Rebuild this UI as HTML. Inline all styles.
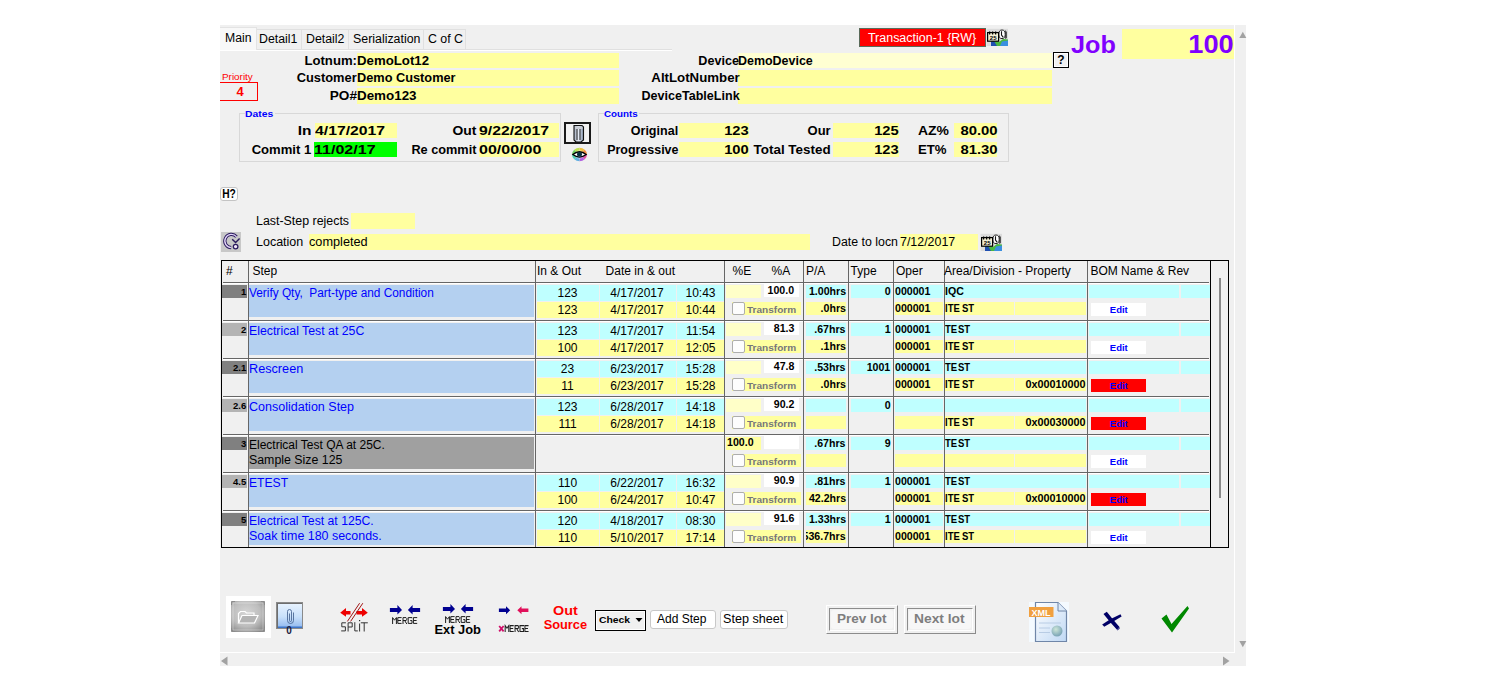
<!DOCTYPE html>
<html><head><meta charset="utf-8"><title>Job</title>
<style>
html,body{margin:0;padding:0;}
body{width:1498px;height:690px;overflow:hidden;background:#fff;position:relative;font-family:"Liberation Sans", sans-serif;}
body>div{position:absolute;}
.t{white-space:pre;}
</style></head><body>
<div style="left:220px;top:25px;width:1026px;height:641px;background:#F0F0F0;"></div>
<div style="left:1234px;top:25px;width:1px;height:628px;background:#FFFFFF;"></div>
<div style="left:220px;top:652px;width:1015px;height:1px;background:#FFFFFF;"></div>
<svg style="position:absolute;left:1238px;top:30px;" width="9" height="10" viewBox="0 0 9 10"><polygon points="1.3,8 8.3,8 4.8,1.8" fill="#A2A2A2"/></svg>
<svg style="position:absolute;left:1238px;top:639px;" width="9" height="10" viewBox="0 0 9 10"><polygon points="1.3,2 8.3,2 4.8,8.2" fill="#A2A2A2"/></svg>
<svg style="position:absolute;left:220px;top:655px;" width="9" height="12" viewBox="0 0 9 12"><polygon points="1,6 7.5,1.5 7.5,10.5" fill="#A2A2A2"/></svg>
<svg style="position:absolute;left:1222px;top:655px;" width="9" height="12" viewBox="0 0 9 12"><polygon points="1,1.5 7.5,6 1,10.5" fill="#A2A2A2"/></svg>
<div style="left:256px;top:29px;width:46px;height:21px;box-sizing:border-box;border:1px solid #E0E0E0;background:#F0F0F0;"></div>
<div style="left:301px;top:29px;width:48px;height:21px;box-sizing:border-box;border:1px solid #E0E0E0;background:#F0F0F0;"></div>
<div style="left:348px;top:29px;width:76px;height:21px;box-sizing:border-box;border:1px solid #E0E0E0;background:#F0F0F0;"></div>
<div style="left:423px;top:29px;width:43px;height:21px;box-sizing:border-box;border:1px solid #E0E0E0;background:#F0F0F0;"></div>
<div style="left:220px;top:27px;width:37px;height:23px;box-sizing:border-box;border:1px solid #E3E3E3;background:#F8F8F8;border-left:none;border-bottom:none;"></div>
<div style="left:466px;top:49px;width:206px;height:1px;background:#E0E0E0;"></div>
<div style="left:220px;top:50px;width:452px;height:1px;background:#FFFFFF;"></div>
<div class="t" style="left:224.5px;top:31.00px;font-size:12px;line-height:14px;font-weight:normal;color:#000;transform:scaleX(1.0163);transform-origin:0 0;">Main</div>
<div class="t" style="left:259.0px;top:32.00px;font-size:12px;line-height:14px;font-weight:normal;color:#000;transform:scaleX(1.0262);transform-origin:0 0;">Detail1</div>
<div class="t" style="left:305.5px;top:32.00px;font-size:12px;line-height:14px;font-weight:normal;color:#000;transform:scaleX(1.0289);transform-origin:0 0;">Detail2</div>
<div class="t" style="left:352.8px;top:32.00px;font-size:12px;line-height:14px;font-weight:normal;color:#000;transform:scaleX(1.0316);transform-origin:0 0;">Serialization</div>
<div class="t" style="left:427.5px;top:32.00px;font-size:12px;line-height:14px;font-weight:normal;color:#000;transform:scaleX(1.0301);transform-origin:0 0;">C of C</div>
<div style="left:357px;top:53px;width:262px;height:15px;background:#FFFF9F;"></div>
<div style="left:357px;top:70px;width:262px;height:16px;background:#FFFF9F;"></div>
<div style="left:357px;top:88px;width:262px;height:16px;background:#FFFF9F;"></div>
<div class="t" style="left:304.72px;top:53.00px;font-size:13px;line-height:15px;font-weight:bold;color:#000;transform:scaleX(1.0111);transform-origin:51.98px 0;">Lotnum:</div>
<div class="t" style="left:356.8px;top:53.00px;font-size:13px;line-height:15px;font-weight:bold;color:#000;transform:scaleX(1.0178);transform-origin:0 0;">DemoLot12</div>
<div class="t" style="left:296.01px;top:70.00px;font-size:13px;line-height:15px;font-weight:bold;color:#000;transform:scaleX(0.9897);transform-origin:60.69px 0;">Customer</div>
<div class="t" style="left:356.8px;top:70.00px;font-size:13px;line-height:15px;font-weight:bold;color:#000;transform:scaleX(0.9815);transform-origin:0 0;">Demo Customer</div>
<div class="t" style="left:330.68px;top:88.00px;font-size:13px;line-height:15px;font-weight:bold;color:#000;transform:scaleX(1.0478);transform-origin:26.02px 0;">PO#</div>
<div class="t" style="left:356.8px;top:88.00px;font-size:13px;line-height:15px;font-weight:bold;color:#000;transform:scaleX(1.0302);transform-origin:0 0;">Demo123</div>
<div style="left:738px;top:53px;width:314px;height:15px;background:#FFFFD2;"></div>
<div style="left:738px;top:70px;width:314px;height:16px;background:#FFFF9F;"></div>
<div style="left:738px;top:88px;width:314px;height:16px;background:#FFFF9F;"></div>
<div class="t" style="left:697.28px;top:53.00px;font-size:13px;line-height:15px;font-weight:bold;color:#000;transform:scaleX(0.9675);transform-origin:41.92px 0;">Device</div>
<div class="t" style="left:737.8px;top:53.00px;font-size:13px;line-height:15px;font-weight:bold;color:#000;transform:scaleX(0.9579);transform-origin:0 0;">DemoDevice</div>
<div class="t" style="left:652.53px;top:70.00px;font-size:13px;line-height:15px;font-weight:bold;color:#000;transform:scaleX(1.0195);transform-origin:86.67px 0;">AltLotNumber</div>
<div class="t" style="left:637.56px;top:88.00px;font-size:13px;line-height:15px;font-weight:bold;color:#000;transform:scaleX(0.9658);transform-origin:101.64px 0;">DeviceTableLink</div>
<div style="left:1053px;top:52px;width:16px;height:16px;box-sizing:border-box;border:1px solid #000;background:#F0F0F0;box-shadow:inset 0 0 0 1px #FFFFFF;"></div>
<div class="t" style="left:761px;width:600px;text-align:center;top:53.00px;font-size:12px;line-height:14px;font-weight:bold;color:#000;">?</div>
<div style="left:859px;top:28px;width:127px;height:19px;box-sizing:border-box;border:1px solid #5A6A5A;background:#FF0000;"></div>
<div class="t" style="left:870.48px;top:31.00px;font-size:12px;line-height:14px;font-weight:normal;color:#FFFFFF;transform:scaleX(1.0393);transform-origin:52.02px 0;">Transaction-1 {RW}</div>
<div class="t" style="left:1071.0px;top:31.00px;font-size:24px;line-height:27px;font-weight:bold;color:#8000FF;transform:scaleX(1.0517);transform-origin:0 0;">Job</div>
<div style="left:1122px;top:29px;width:112px;height:30px;background:#FFFF9F;"></div>
<div class="t" style="left:1191.98px;top:30.00px;font-size:25px;line-height:28px;font-weight:bold;color:#8000FF;transform:scaleX(1.0882);transform-origin:41.72px 0;">100</div>
<div class="t" style="left:222.0px;top:72.00px;font-size:9px;line-height:10px;font-weight:normal;color:#FF0000;transform:scaleX(1.0987);transform-origin:0 0;">Priority</div>
<div style="left:220px;top:82px;width:38px;height:19px;box-sizing:border-box;border:1px solid #FF0000;background:transparent;border-left:none;"></div>
<div class="t" style="left:-60px;width:600px;text-align:center;top:84.00px;font-size:13px;line-height:15px;font-weight:bold;color:#FF0000;">4</div>
<div style="left:239px;top:113px;width:322px;height:49px;box-sizing:border-box;border:1px solid #D8D8D8;background:transparent;"></div>
<div style="left:244.6px;top:109px;width:30.00000000000003px;height:7px;background:#F0F0F0;"></div>
<div class="t" style="left:244.6px;top:108.00px;font-size:9.5px;line-height:11px;font-weight:bold;color:#0000FF;transform:scaleX(1.0875);transform-origin:0 0;">Dates</div>
<div style="left:598px;top:113px;width:411px;height:49px;box-sizing:border-box;border:1px solid #D8D8D8;background:transparent;"></div>
<div style="left:603.5px;top:109px;width:35.5px;height:7px;background:#F0F0F0;"></div>
<div class="t" style="left:603.5px;top:108.00px;font-size:9.5px;line-height:11px;font-weight:bold;color:#0000FF;transform:scaleX(1.0282);transform-origin:0 0;">Counts</div>
<div class="t" style="left:299.64px;top:123.00px;font-size:13px;line-height:15px;font-weight:bold;color:#000;transform:scaleX(1.1901);transform-origin:11.56px 0;">In</div>
<div style="left:315px;top:123px;width:82px;height:15px;background:#FFFF9F;"></div>
<div class="t" style="left:314.5px;top:123.00px;font-size:13px;line-height:15px;font-weight:bold;color:#000;transform:scaleX(1.2112);transform-origin:0 0;">4/17/2017</div>
<div class="t" style="left:252.47px;top:142.00px;font-size:13px;line-height:15px;font-weight:bold;color:#000;transform:scaleX(1.0055);transform-origin:59.23px 0;">Commit 1</div>
<div style="left:314px;top:142px;width:83px;height:15px;background:#00FF00;"></div>
<div class="t" style="left:313.5px;top:142.00px;font-size:13px;line-height:15px;font-weight:bold;color:#000;transform:scaleX(1.2339);transform-origin:0 0;">11/02/17</div>
<div class="t" style="left:454.11px;top:123.00px;font-size:13px;line-height:15px;font-weight:bold;color:#000;transform:scaleX(1.0701);transform-origin:22.39px 0;">Out</div>
<div style="left:479px;top:123px;width:80px;height:15px;background:#FFFF9F;"></div>
<div class="t" style="left:478.5px;top:123.00px;font-size:13px;line-height:15px;font-weight:bold;color:#000;transform:scaleX(1.2112);transform-origin:0 0;">9/22/2017</div>
<div class="t" style="left:410.23px;top:142.00px;font-size:13px;line-height:15px;font-weight:bold;color:#000;transform:scaleX(0.9788);transform-origin:66.47px 0;">Re commit</div>
<div style="left:479px;top:142px;width:80px;height:15px;background:#FFFF9F;"></div>
<div class="t" style="left:478.5px;top:142.00px;font-size:13px;line-height:15px;font-weight:bold;color:#000;transform:scaleX(1.2322);transform-origin:0 0;">00/00/00</div>
<div class="t" style="left:629.08px;top:123.00px;font-size:13px;line-height:15px;font-weight:bold;color:#000;transform:scaleX(0.9641);transform-origin:49.12px 0;">Original</div>
<div style="left:679px;top:123px;width:70px;height:15px;background:#FFFF9F;"></div>
<div class="t" style="left:727.00px;top:123.00px;font-size:13px;line-height:15px;font-weight:bold;color:#000;transform:scaleX(1.1316);transform-origin:21.70px 0;">123</div>
<div class="t" style="left:603.76px;top:142.00px;font-size:13px;line-height:15px;font-weight:bold;color:#000;transform:scaleX(0.9573);transform-origin:74.44px 0;">Progressive</div>
<div style="left:679px;top:142px;width:70px;height:15px;background:#FFFF9F;"></div>
<div class="t" style="left:727.00px;top:142.00px;font-size:13px;line-height:15px;font-weight:bold;color:#000;transform:scaleX(1.1316);transform-origin:21.70px 0;">100</div>
<div class="t" style="left:230.70000000000005px;width:600px;text-align:right;top:123.00px;font-size:13px;line-height:15px;font-weight:bold;color:#000;">Our</div>
<div style="left:833px;top:123px;width:66px;height:15px;background:#FFFF9F;"></div>
<div class="t" style="left:877.00px;top:123.00px;font-size:13px;line-height:15px;font-weight:bold;color:#000;transform:scaleX(1.1316);transform-origin:21.70px 0;">125</div>
<div class="t" style="left:756.06px;top:142.00px;font-size:13px;line-height:15px;font-weight:bold;color:#000;transform:scaleX(1.0324);transform-origin:74.64px 0;">Total Tested</div>
<div style="left:833px;top:142px;width:66px;height:15px;background:#FFFF9F;"></div>
<div class="t" style="left:877.00px;top:142.00px;font-size:13px;line-height:15px;font-weight:bold;color:#000;transform:scaleX(1.1316);transform-origin:21.70px 0;">123</div>
<div class="t" style="left:918.0px;top:123.00px;font-size:13px;line-height:15px;font-weight:bold;color:#000;transform:scaleX(1.0716);transform-origin:0 0;">AZ%</div>
<div style="left:954px;top:123px;width:43px;height:15px;background:#FFFF9F;"></div>
<div class="t" style="left:964.65px;top:123.00px;font-size:13px;line-height:15px;font-weight:bold;color:#000;transform:scaleX(1.1417);transform-origin:32.55px 0;">80.00</div>
<div class="t" style="left:918.0px;top:142.00px;font-size:13px;line-height:15px;font-weight:bold;color:#000;transform:scaleX(1.0138);transform-origin:0 0;">ET%</div>
<div style="left:954px;top:142px;width:43px;height:15px;background:#FFFF9F;"></div>
<div class="t" style="left:964.65px;top:142.00px;font-size:13px;line-height:15px;font-weight:bold;color:#000;transform:scaleX(1.1417);transform-origin:32.55px 0;">81.30</div>
<div style="left:220px;top:187px;width:18px;height:14px;box-sizing:border-box;border:1px solid #C4C4C4;background:#FFFFFF;border-radius:3px;"></div>
<div class="t" style="left:221.00px;top:187.00px;font-size:12px;line-height:14px;font-weight:bold;color:#000;transform:scaleX(0.8525);transform-origin:8.00px 0;">H?</div>
<div class="t" style="left:255.60000000000002px;top:214.00px;font-size:12px;line-height:14px;font-weight:normal;color:#000;transform:scaleX(1.0332);transform-origin:0 0;">Last-Step rejects</div>
<div style="left:351px;top:213px;width:64px;height:16px;background:#FFFF9F;"></div>
<div class="t" style="left:255.60000000000002px;top:235.00px;font-size:12px;line-height:14px;font-weight:normal;color:#000;transform:scaleX(1.0411);transform-origin:0 0;">Location</div>
<div style="left:309px;top:234px;width:501px;height:16px;background:#FFFF9F;"></div>
<div class="t" style="left:308.7px;top:235.00px;font-size:12px;line-height:14px;font-weight:normal;color:#000;transform:scaleX(1.0590);transform-origin:0 0;">completed</div>
<div class="t" style="left:832.0px;top:235.00px;font-size:12px;line-height:14px;font-weight:normal;color:#000;transform:scaleX(1.0296);transform-origin:0 0;">Date to locn</div>
<div style="left:900px;top:234px;width:78px;height:16px;background:#FFFF9F;"></div>
<div class="t" style="left:899.5px;top:235.00px;font-size:12px;line-height:14px;font-weight:normal;color:#000;transform:scaleX(1.0346);transform-origin:0 0;">7/12/2017</div>
<div style="left:221px;top:260px;width:1008px;height:288px;box-sizing:border-box;border:1px solid #000;background:transparent;"></div>
<div style="left:223px;top:282px;width:986px;height:1px;background:#666666;"></div>
<div style="left:223px;top:283px;width:986px;height:1px;background:#FFFFFF;"></div>
<div style="left:223px;top:320px;width:986px;height:1px;background:#666666;"></div>
<div style="left:223px;top:321px;width:986px;height:1px;background:#FFFFFF;"></div>
<div style="left:223px;top:358px;width:986px;height:1px;background:#666666;"></div>
<div style="left:223px;top:359px;width:986px;height:1px;background:#FFFFFF;"></div>
<div style="left:223px;top:396px;width:986px;height:1px;background:#666666;"></div>
<div style="left:223px;top:397px;width:986px;height:1px;background:#FFFFFF;"></div>
<div style="left:223px;top:434px;width:986px;height:1px;background:#666666;"></div>
<div style="left:223px;top:435px;width:986px;height:1px;background:#FFFFFF;"></div>
<div style="left:223px;top:472px;width:986px;height:1px;background:#666666;"></div>
<div style="left:223px;top:473px;width:986px;height:1px;background:#FFFFFF;"></div>
<div style="left:223px;top:510px;width:986px;height:1px;background:#666666;"></div>
<div style="left:223px;top:511px;width:986px;height:1px;background:#FFFFFF;"></div>
<div style="left:248px;top:261px;width:1px;height:286px;background:#666666;"></div>
<div style="left:535px;top:261px;width:1px;height:286px;background:#666666;"></div>
<div style="left:724px;top:261px;width:1px;height:286px;background:#666666;"></div>
<div style="left:803px;top:261px;width:1px;height:286px;background:#666666;"></div>
<div style="left:848px;top:261px;width:1px;height:286px;background:#666666;"></div>
<div style="left:893px;top:261px;width:1px;height:286px;background:#666666;"></div>
<div style="left:944px;top:261px;width:1px;height:286px;background:#666666;"></div>
<div style="left:1087px;top:261px;width:1px;height:286px;background:#666666;"></div>
<div style="left:1210px;top:261px;width:1px;height:286px;background:#000000;"></div>
<div style="left:1219px;top:278px;width:2px;height:220px;background:#888888;"></div>
<div class="t" style="left:226.0px;top:264.00px;font-size:12px;line-height:14px;font-weight:normal;color:#000;">#</div>
<div class="t" style="left:252.5px;top:264.00px;font-size:12px;line-height:14px;font-weight:normal;color:#000;">Step</div>
<div class="t" style="left:537.0px;top:264.00px;font-size:12px;line-height:14px;font-weight:normal;color:#000;">In &amp; Out</div>
<div class="t" style="left:605.6px;top:264.00px;font-size:12px;line-height:14px;font-weight:normal;color:#000;">Date in &amp; out</div>
<div class="t" style="left:732.6px;top:264.00px;font-size:12px;line-height:14px;font-weight:normal;color:#000;">%E</div>
<div class="t" style="left:771.6px;top:264.00px;font-size:12px;line-height:14px;font-weight:normal;color:#000;">%A</div>
<div class="t" style="left:806.0px;top:264.00px;font-size:12px;line-height:14px;font-weight:normal;color:#000;">P/A</div>
<div class="t" style="left:850.6px;top:264.00px;font-size:12px;line-height:14px;font-weight:normal;color:#000;">Type</div>
<div class="t" style="left:896.0px;top:264.00px;font-size:12px;line-height:14px;font-weight:normal;color:#000;">Oper</div>
<div class="t" style="left:944.0px;top:264.00px;font-size:12px;line-height:14px;font-weight:normal;color:#000;">Area/Division - Property</div>
<div class="t" style="left:1090.4px;top:264.00px;font-size:12px;line-height:14px;font-weight:normal;color:#000;">BOM Name &amp; Rev</div>
<div style="left:222px;top:285px;width:25px;height:13px;background:#808080;"></div>
<div class="t" style="left:-353.8px;width:600px;text-align:right;top:286.00px;font-size:9.5px;line-height:11px;font-weight:bold;color:#000;">1</div>
<div style="left:249px;top:285px;width:285px;height:32px;background:#B4D0F0;"></div>
<div class="t" style="left:249.0px;top:286.00px;font-size:12px;line-height:14px;font-weight:normal;color:#0000FF;transform:scaleX(0.9868);transform-origin:0 0;">Verify Qty,  Part-type and Condition</div>
<div style="left:537px;top:285px;width:62px;height:16px;background:#BFFFFF;"></div>
<div style="left:537px;top:302px;width:62px;height:16px;background:#FFFF9F;"></div>
<div style="left:600px;top:285px;width:76px;height:16px;background:#BFFFFF;"></div>
<div style="left:600px;top:302px;width:76px;height:16px;background:#FFFF9F;"></div>
<div style="left:677px;top:285px;width:47px;height:16px;background:#BFFFFF;"></div>
<div style="left:677px;top:302px;width:47px;height:16px;background:#FFFF9F;"></div>
<div class="t" style="left:267.5px;width:600px;text-align:center;top:286.00px;font-size:12px;line-height:14px;font-weight:normal;color:#000;">123</div>
<div class="t" style="left:267.5px;width:600px;text-align:center;top:303.00px;font-size:12px;line-height:14px;font-weight:normal;color:#000;">123</div>
<div class="t" style="left:337px;width:600px;text-align:center;top:286.00px;font-size:12px;line-height:14px;font-weight:normal;color:#000;">4/17/2017</div>
<div class="t" style="left:337px;width:600px;text-align:center;top:303.00px;font-size:12px;line-height:14px;font-weight:normal;color:#000;">4/17/2017</div>
<div class="t" style="left:400.5px;width:600px;text-align:center;top:286.00px;font-size:12px;line-height:14px;font-weight:normal;color:#000;">10:43</div>
<div class="t" style="left:400.5px;width:600px;text-align:center;top:303.00px;font-size:12px;line-height:14px;font-weight:normal;color:#000;">10:44</div>
<div style="left:726px;top:285px;width:35px;height:13px;background:#FFFFC8;"></div>
<div style="left:764px;top:284px;width:35px;height:13px;background:#FFFFFF;"></div>
<div class="t" style="left:769.47px;top:285.00px;font-size:10px;line-height:11px;font-weight:bold;color:#000;transform:scaleX(1.0600);transform-origin:25.03px 0;">100.0</div>
<div style="left:732px;top:302px;width:69px;height:13px;background:#FFFF9F;"></div>
<div style="left:732px;top:302px;width:13px;height:13px;box-sizing:border-box;border:1px solid #ADADAD;background:#FDFDFD;border-radius:2px;"></div>
<div class="t" style="left:747.0px;top:304.00px;font-size:9.5px;line-height:11px;font-weight:bold;color:#76767A;transform:scaleX(1.0575);transform-origin:0 0;">Transform</div>
<div style="left:806px;top:285px;width:40px;height:13px;background:#BFFFFF;"></div>
<div style="left:806px;top:302px;width:40px;height:13px;background:#FFFF9F;"></div>
<div class="t" style="left:810.77px;top:286.00px;font-size:10px;line-height:11px;font-weight:bold;color:#000;transform:scaleX(1.0600);transform-origin:35.03px 0;">1.00hrs</div>
<div class="t" style="left:821.89px;top:303.00px;font-size:10px;line-height:11px;font-weight:bold;color:#000;transform:scaleX(1.0600);transform-origin:23.91px 0;">.0hrs</div>
<div style="left:851px;top:285px;width:40px;height:13px;background:#BFFFFF;"></div>
<div class="t" style="left:884.94px;top:286.00px;font-size:10px;line-height:11px;font-weight:bold;color:#000;transform:scaleX(1.0600);transform-origin:5.56px 0;">0</div>
<div style="left:895px;top:285px;width:48px;height:13px;background:#BFFFFF;"></div>
<div style="left:895px;top:302px;width:48px;height:13px;background:#FFFF9F;"></div>
<div class="t" style="left:894.5px;top:286.00px;font-size:10px;line-height:11px;font-weight:bold;color:#000;transform:scaleX(1.0607);transform-origin:0 0;">000001</div>
<div class="t" style="left:894.5px;top:303.00px;font-size:10px;line-height:11px;font-weight:bold;color:#000;transform:scaleX(1.0607);transform-origin:0 0;">000001</div>
<div style="left:945px;top:285px;width:141px;height:13px;background:#BFFFFF;"></div>
<div style="left:945px;top:302px;width:69px;height:13px;background:#FFFF9F;"></div>
<div style="left:1015px;top:302px;width:71px;height:13px;background:#FFFF9F;"></div>
<div class="t" style="left:944.5px;top:286.00px;font-size:10px;line-height:11px;font-weight:bold;color:#000;transform:scaleX(1.0600);transform-origin:0 0;">IQC</div>
<div class="t" style="left:945.0px;top:303.00px;font-size:10px;line-height:11px;font-weight:bold;color:#000;transform:scaleX(0.9500);transform-origin:0 0;">ITE</div>
<div class="t" style="left:961.5px;top:303.00px;font-size:10px;line-height:11px;font-weight:bold;color:#000;transform:scaleX(0.9500);transform-origin:0 0;">ST</div>
<div style="left:1089px;top:285px;width:90px;height:13px;background:#BFFFFF;"></div>
<div style="left:1181px;top:285px;width:29px;height:13px;background:#BFFFFF;"></div>
<div style="left:1091px;top:303px;width:55px;height:13px;background:#FFFFFF;"></div>
<div class="t" style="left:818.8px;width:600px;text-align:center;top:304.00px;font-size:9.5px;line-height:11px;font-weight:bold;color:#0000FF;">Edit</div>
<div style="left:222px;top:323px;width:25px;height:13px;background:#B4B4B4;"></div>
<div class="t" style="left:-353.8px;width:600px;text-align:right;top:324.00px;font-size:9.5px;line-height:11px;font-weight:bold;color:#000;">2</div>
<div style="left:249px;top:323px;width:285px;height:32px;background:#B4D0F0;"></div>
<div class="t" style="left:249.0px;top:324.00px;font-size:12px;line-height:14px;font-weight:normal;color:#0000FF;transform:scaleX(1.0252);transform-origin:0 0;">Electrical Test at 25C</div>
<div style="left:537px;top:323px;width:62px;height:16px;background:#BFFFFF;"></div>
<div style="left:537px;top:340px;width:62px;height:16px;background:#FFFF9F;"></div>
<div style="left:600px;top:323px;width:76px;height:16px;background:#BFFFFF;"></div>
<div style="left:600px;top:340px;width:76px;height:16px;background:#FFFF9F;"></div>
<div style="left:677px;top:323px;width:47px;height:16px;background:#BFFFFF;"></div>
<div style="left:677px;top:340px;width:47px;height:16px;background:#FFFF9F;"></div>
<div class="t" style="left:267.5px;width:600px;text-align:center;top:324.00px;font-size:12px;line-height:14px;font-weight:normal;color:#000;">123</div>
<div class="t" style="left:267.5px;width:600px;text-align:center;top:341.00px;font-size:12px;line-height:14px;font-weight:normal;color:#000;">100</div>
<div class="t" style="left:337px;width:600px;text-align:center;top:324.00px;font-size:12px;line-height:14px;font-weight:normal;color:#000;">4/17/2017</div>
<div class="t" style="left:337px;width:600px;text-align:center;top:341.00px;font-size:12px;line-height:14px;font-weight:normal;color:#000;">4/17/2017</div>
<div class="t" style="left:400.5px;width:600px;text-align:center;top:324.00px;font-size:12px;line-height:14px;font-weight:normal;color:#000;">11:54</div>
<div class="t" style="left:400.5px;width:600px;text-align:center;top:341.00px;font-size:12px;line-height:14px;font-weight:normal;color:#000;">12:05</div>
<div style="left:726px;top:323px;width:35px;height:13px;background:#FFFFC8;"></div>
<div style="left:764px;top:322px;width:35px;height:13px;background:#FFFFFF;"></div>
<div class="t" style="left:775.03px;top:323.00px;font-size:10px;line-height:11px;font-weight:bold;color:#000;transform:scaleX(1.0600);transform-origin:19.47px 0;">81.3</div>
<div style="left:732px;top:340px;width:69px;height:13px;background:#FFFF9F;"></div>
<div style="left:732px;top:340px;width:13px;height:13px;box-sizing:border-box;border:1px solid #ADADAD;background:#FDFDFD;border-radius:2px;"></div>
<div class="t" style="left:747.0px;top:342.00px;font-size:9.5px;line-height:11px;font-weight:bold;color:#76767A;transform:scaleX(1.0575);transform-origin:0 0;">Transform</div>
<div style="left:806px;top:323px;width:40px;height:13px;background:#BFFFFF;"></div>
<div style="left:806px;top:340px;width:40px;height:13px;background:#FFFF9F;"></div>
<div class="t" style="left:816.33px;top:324.00px;font-size:10px;line-height:11px;font-weight:bold;color:#000;transform:scaleX(1.0600);transform-origin:29.47px 0;">.67hrs</div>
<div class="t" style="left:821.89px;top:341.00px;font-size:10px;line-height:11px;font-weight:bold;color:#000;transform:scaleX(1.0600);transform-origin:23.91px 0;">.1hrs</div>
<div style="left:851px;top:323px;width:40px;height:13px;background:#BFFFFF;"></div>
<div class="t" style="left:884.94px;top:324.00px;font-size:10px;line-height:11px;font-weight:bold;color:#000;transform:scaleX(1.0600);transform-origin:5.56px 0;">1</div>
<div style="left:895px;top:323px;width:48px;height:13px;background:#BFFFFF;"></div>
<div style="left:895px;top:340px;width:48px;height:13px;background:#FFFF9F;"></div>
<div class="t" style="left:894.5px;top:324.00px;font-size:10px;line-height:11px;font-weight:bold;color:#000;transform:scaleX(1.0607);transform-origin:0 0;">000001</div>
<div class="t" style="left:894.5px;top:341.00px;font-size:10px;line-height:11px;font-weight:bold;color:#000;transform:scaleX(1.0607);transform-origin:0 0;">000001</div>
<div style="left:945px;top:323px;width:141px;height:13px;background:#BFFFFF;"></div>
<div style="left:945px;top:340px;width:69px;height:13px;background:#FFFF9F;"></div>
<div style="left:1015px;top:340px;width:71px;height:13px;background:#FFFF9F;"></div>
<div class="t" style="left:944.5px;top:324.00px;font-size:10px;line-height:11px;font-weight:bold;color:#000;transform:scaleX(0.9500);transform-origin:0 0;">TE</div>
<div class="t" style="left:958.0px;top:324.00px;font-size:10px;line-height:11px;font-weight:bold;color:#000;transform:scaleX(0.9500);transform-origin:0 0;">ST</div>
<div class="t" style="left:945.0px;top:341.00px;font-size:10px;line-height:11px;font-weight:bold;color:#000;transform:scaleX(0.9500);transform-origin:0 0;">ITE</div>
<div class="t" style="left:961.5px;top:341.00px;font-size:10px;line-height:11px;font-weight:bold;color:#000;transform:scaleX(0.9500);transform-origin:0 0;">ST</div>
<div style="left:1089px;top:323px;width:90px;height:13px;background:#BFFFFF;"></div>
<div style="left:1181px;top:323px;width:29px;height:13px;background:#BFFFFF;"></div>
<div style="left:1091px;top:341px;width:55px;height:13px;background:#FFFFFF;"></div>
<div class="t" style="left:818.8px;width:600px;text-align:center;top:342.00px;font-size:9.5px;line-height:11px;font-weight:bold;color:#0000FF;">Edit</div>
<div style="left:222px;top:361px;width:25px;height:13px;background:#808080;"></div>
<div class="t" style="left:-353.8px;width:600px;text-align:right;top:362.00px;font-size:9.5px;line-height:11px;font-weight:bold;color:#000;">2.1</div>
<div style="left:249px;top:361px;width:285px;height:32px;background:#B4D0F0;"></div>
<div class="t" style="left:249.0px;top:362.00px;font-size:12px;line-height:14px;font-weight:normal;color:#0000FF;transform:scaleX(1.0561);transform-origin:0 0;">Rescreen</div>
<div style="left:537px;top:361px;width:62px;height:16px;background:#BFFFFF;"></div>
<div style="left:537px;top:378px;width:62px;height:16px;background:#FFFF9F;"></div>
<div style="left:600px;top:361px;width:76px;height:16px;background:#BFFFFF;"></div>
<div style="left:600px;top:378px;width:76px;height:16px;background:#FFFF9F;"></div>
<div style="left:677px;top:361px;width:47px;height:16px;background:#BFFFFF;"></div>
<div style="left:677px;top:378px;width:47px;height:16px;background:#FFFF9F;"></div>
<div class="t" style="left:267.5px;width:600px;text-align:center;top:362.00px;font-size:12px;line-height:14px;font-weight:normal;color:#000;">23</div>
<div class="t" style="left:267.5px;width:600px;text-align:center;top:379.00px;font-size:12px;line-height:14px;font-weight:normal;color:#000;">11</div>
<div class="t" style="left:337px;width:600px;text-align:center;top:362.00px;font-size:12px;line-height:14px;font-weight:normal;color:#000;">6/23/2017</div>
<div class="t" style="left:337px;width:600px;text-align:center;top:379.00px;font-size:12px;line-height:14px;font-weight:normal;color:#000;">6/23/2017</div>
<div class="t" style="left:400.5px;width:600px;text-align:center;top:362.00px;font-size:12px;line-height:14px;font-weight:normal;color:#000;">15:28</div>
<div class="t" style="left:400.5px;width:600px;text-align:center;top:379.00px;font-size:12px;line-height:14px;font-weight:normal;color:#000;">15:28</div>
<div style="left:726px;top:361px;width:35px;height:13px;background:#FFFFC8;"></div>
<div style="left:764px;top:360px;width:35px;height:13px;background:#FFFFFF;"></div>
<div class="t" style="left:775.03px;top:361.00px;font-size:10px;line-height:11px;font-weight:bold;color:#000;transform:scaleX(1.0600);transform-origin:19.47px 0;">47.8</div>
<div style="left:732px;top:378px;width:69px;height:13px;background:#FFFF9F;"></div>
<div style="left:732px;top:378px;width:13px;height:13px;box-sizing:border-box;border:1px solid #ADADAD;background:#FDFDFD;border-radius:2px;"></div>
<div class="t" style="left:747.0px;top:380.00px;font-size:9.5px;line-height:11px;font-weight:bold;color:#76767A;transform:scaleX(1.0575);transform-origin:0 0;">Transform</div>
<div style="left:806px;top:361px;width:40px;height:13px;background:#BFFFFF;"></div>
<div style="left:806px;top:378px;width:40px;height:13px;background:#FFFF9F;"></div>
<div class="t" style="left:816.33px;top:362.00px;font-size:10px;line-height:11px;font-weight:bold;color:#000;transform:scaleX(1.0600);transform-origin:29.47px 0;">.53hrs</div>
<div class="t" style="left:821.89px;top:379.00px;font-size:10px;line-height:11px;font-weight:bold;color:#000;transform:scaleX(1.0600);transform-origin:23.91px 0;">.0hrs</div>
<div style="left:851px;top:361px;width:40px;height:13px;background:#BFFFFF;"></div>
<div class="t" style="left:868.25px;top:362.00px;font-size:10px;line-height:11px;font-weight:bold;color:#000;transform:scaleX(1.0600);transform-origin:22.25px 0;">1001</div>
<div style="left:895px;top:361px;width:48px;height:13px;background:#BFFFFF;"></div>
<div style="left:895px;top:378px;width:48px;height:13px;background:#FFFF9F;"></div>
<div class="t" style="left:894.5px;top:362.00px;font-size:10px;line-height:11px;font-weight:bold;color:#000;transform:scaleX(1.0607);transform-origin:0 0;">000001</div>
<div class="t" style="left:894.5px;top:379.00px;font-size:10px;line-height:11px;font-weight:bold;color:#000;transform:scaleX(1.0607);transform-origin:0 0;">000001</div>
<div style="left:945px;top:361px;width:141px;height:13px;background:#BFFFFF;"></div>
<div style="left:945px;top:378px;width:69px;height:13px;background:#FFFF9F;"></div>
<div style="left:1015px;top:378px;width:71px;height:13px;background:#FFFF9F;"></div>
<div class="t" style="left:944.5px;top:362.00px;font-size:10px;line-height:11px;font-weight:bold;color:#000;transform:scaleX(0.9500);transform-origin:0 0;">TE</div>
<div class="t" style="left:958.0px;top:362.00px;font-size:10px;line-height:11px;font-weight:bold;color:#000;transform:scaleX(0.9500);transform-origin:0 0;">ST</div>
<div class="t" style="left:945.0px;top:379.00px;font-size:10px;line-height:11px;font-weight:bold;color:#000;transform:scaleX(0.9500);transform-origin:0 0;">ITE</div>
<div class="t" style="left:961.5px;top:379.00px;font-size:10px;line-height:11px;font-weight:bold;color:#000;transform:scaleX(0.9500);transform-origin:0 0;">ST</div>
<div class="t" style="left:1029.98px;top:379.00px;font-size:10px;line-height:11px;font-weight:bold;color:#000;transform:scaleX(1.0822);transform-origin:55.62px 0;">0x00010000</div>
<div style="left:1089px;top:361px;width:90px;height:13px;background:#BFFFFF;"></div>
<div style="left:1181px;top:361px;width:29px;height:13px;background:#BFFFFF;"></div>
<div style="left:1091px;top:379px;width:55px;height:13px;background:#FF0000;"></div>
<div class="t" style="left:818.8px;width:600px;text-align:center;top:380.00px;font-size:9.5px;line-height:11px;font-weight:bold;color:#0000FF;">Edit</div>
<div style="left:222px;top:399px;width:25px;height:13px;background:#B4B4B4;"></div>
<div class="t" style="left:-353.8px;width:600px;text-align:right;top:400.00px;font-size:9.5px;line-height:11px;font-weight:bold;color:#000;">2.6</div>
<div style="left:249px;top:399px;width:285px;height:32px;background:#B4D0F0;"></div>
<div class="t" style="left:249.0px;top:400.00px;font-size:12px;line-height:14px;font-weight:normal;color:#0000FF;transform:scaleX(1.0427);transform-origin:0 0;">Consolidation Step</div>
<div style="left:537px;top:399px;width:62px;height:16px;background:#BFFFFF;"></div>
<div style="left:537px;top:416px;width:62px;height:16px;background:#FFFF9F;"></div>
<div style="left:600px;top:399px;width:76px;height:16px;background:#BFFFFF;"></div>
<div style="left:600px;top:416px;width:76px;height:16px;background:#FFFF9F;"></div>
<div style="left:677px;top:399px;width:47px;height:16px;background:#BFFFFF;"></div>
<div style="left:677px;top:416px;width:47px;height:16px;background:#FFFF9F;"></div>
<div class="t" style="left:267.5px;width:600px;text-align:center;top:400.00px;font-size:12px;line-height:14px;font-weight:normal;color:#000;">123</div>
<div class="t" style="left:267.5px;width:600px;text-align:center;top:417.00px;font-size:12px;line-height:14px;font-weight:normal;color:#000;">111</div>
<div class="t" style="left:337px;width:600px;text-align:center;top:400.00px;font-size:12px;line-height:14px;font-weight:normal;color:#000;">6/28/2017</div>
<div class="t" style="left:337px;width:600px;text-align:center;top:417.00px;font-size:12px;line-height:14px;font-weight:normal;color:#000;">6/28/2017</div>
<div class="t" style="left:400.5px;width:600px;text-align:center;top:400.00px;font-size:12px;line-height:14px;font-weight:normal;color:#000;">14:18</div>
<div class="t" style="left:400.5px;width:600px;text-align:center;top:417.00px;font-size:12px;line-height:14px;font-weight:normal;color:#000;">14:18</div>
<div style="left:726px;top:399px;width:35px;height:13px;background:#FFFFC8;"></div>
<div style="left:764px;top:398px;width:35px;height:13px;background:#FFFFFF;"></div>
<div class="t" style="left:775.03px;top:399.00px;font-size:10px;line-height:11px;font-weight:bold;color:#000;transform:scaleX(1.0600);transform-origin:19.47px 0;">90.2</div>
<div style="left:732px;top:416px;width:69px;height:13px;background:#FFFF9F;"></div>
<div style="left:732px;top:416px;width:13px;height:13px;box-sizing:border-box;border:1px solid #ADADAD;background:#FDFDFD;border-radius:2px;"></div>
<div class="t" style="left:747.0px;top:418.00px;font-size:9.5px;line-height:11px;font-weight:bold;color:#76767A;transform:scaleX(1.0575);transform-origin:0 0;">Transform</div>
<div style="left:806px;top:399px;width:40px;height:13px;background:#BFFFFF;"></div>
<div style="left:806px;top:416px;width:40px;height:13px;background:#FFFF9F;"></div>
<div style="left:851px;top:399px;width:40px;height:13px;background:#BFFFFF;"></div>
<div class="t" style="left:884.94px;top:400.00px;font-size:10px;line-height:11px;font-weight:bold;color:#000;transform:scaleX(1.0600);transform-origin:5.56px 0;">0</div>
<div style="left:895px;top:399px;width:48px;height:13px;background:#BFFFFF;"></div>
<div style="left:895px;top:416px;width:48px;height:13px;background:#FFFF9F;"></div>
<div style="left:945px;top:399px;width:141px;height:13px;background:#BFFFFF;"></div>
<div style="left:945px;top:416px;width:69px;height:13px;background:#FFFF9F;"></div>
<div style="left:1015px;top:416px;width:71px;height:13px;background:#FFFF9F;"></div>
<div class="t" style="left:945.0px;top:417.00px;font-size:10px;line-height:11px;font-weight:bold;color:#000;transform:scaleX(0.9500);transform-origin:0 0;">ITE</div>
<div class="t" style="left:961.5px;top:417.00px;font-size:10px;line-height:11px;font-weight:bold;color:#000;transform:scaleX(0.9500);transform-origin:0 0;">ST</div>
<div class="t" style="left:1029.98px;top:417.00px;font-size:10px;line-height:11px;font-weight:bold;color:#000;transform:scaleX(1.0822);transform-origin:55.62px 0;">0x00030000</div>
<div style="left:1089px;top:399px;width:90px;height:13px;background:#BFFFFF;"></div>
<div style="left:1181px;top:399px;width:29px;height:13px;background:#BFFFFF;"></div>
<div style="left:1091px;top:417px;width:55px;height:13px;background:#FF0000;"></div>
<div class="t" style="left:818.8px;width:600px;text-align:center;top:418.00px;font-size:9.5px;line-height:11px;font-weight:bold;color:#0000FF;">Edit</div>
<div style="left:222px;top:437px;width:25px;height:13px;background:#808080;"></div>
<div class="t" style="left:-353.8px;width:600px;text-align:right;top:438.00px;font-size:9.5px;line-height:11px;font-weight:bold;color:#000;">3</div>
<div style="left:249px;top:437px;width:285px;height:32px;background:#A0A0A0;"></div>
<div class="t" style="left:249.0px;top:438.00px;font-size:12px;line-height:14px;font-weight:normal;color:#000000;">Electrical Test QA at 25C.</div>
<div class="t" style="left:249.0px;top:453.00px;font-size:12px;line-height:14px;font-weight:normal;color:#000000;transform:scaleX(1.0298);transform-origin:0 0;">Sample Size 125</div>
<div style="left:726px;top:437px;width:35px;height:13px;background:#FFFF9F;"></div>
<div class="t" style="left:727.0px;top:437.00px;font-size:10px;line-height:11px;font-weight:bold;color:#000;transform:scaleX(1.0600);transform-origin:0 0;">100.0</div>
<div style="left:764px;top:436px;width:35px;height:13px;background:#FFFFFF;"></div>
<div style="left:732px;top:454px;width:69px;height:13px;background:#FFFF9F;"></div>
<div style="left:732px;top:454px;width:13px;height:13px;box-sizing:border-box;border:1px solid #ADADAD;background:#FDFDFD;border-radius:2px;"></div>
<div class="t" style="left:747.0px;top:456.00px;font-size:9.5px;line-height:11px;font-weight:bold;color:#76767A;transform:scaleX(1.0575);transform-origin:0 0;">Transform</div>
<div style="left:806px;top:437px;width:40px;height:13px;background:#BFFFFF;"></div>
<div style="left:806px;top:454px;width:40px;height:13px;background:#FFFF9F;"></div>
<div class="t" style="left:816.33px;top:438.00px;font-size:10px;line-height:11px;font-weight:bold;color:#000;transform:scaleX(1.0600);transform-origin:29.47px 0;">.67hrs</div>
<div style="left:851px;top:437px;width:40px;height:13px;background:#BFFFFF;"></div>
<div class="t" style="left:884.94px;top:438.00px;font-size:10px;line-height:11px;font-weight:bold;color:#000;transform:scaleX(1.0600);transform-origin:5.56px 0;">9</div>
<div style="left:895px;top:437px;width:48px;height:13px;background:#BFFFFF;"></div>
<div style="left:895px;top:454px;width:48px;height:13px;background:#FFFF9F;"></div>
<div style="left:945px;top:437px;width:141px;height:13px;background:#BFFFFF;"></div>
<div style="left:945px;top:454px;width:69px;height:13px;background:#FFFF9F;"></div>
<div style="left:1015px;top:454px;width:71px;height:13px;background:#FFFF9F;"></div>
<div class="t" style="left:944.5px;top:438.00px;font-size:10px;line-height:11px;font-weight:bold;color:#000;transform:scaleX(0.9500);transform-origin:0 0;">TE</div>
<div class="t" style="left:958.0px;top:438.00px;font-size:10px;line-height:11px;font-weight:bold;color:#000;transform:scaleX(0.9500);transform-origin:0 0;">ST</div>
<div style="left:1089px;top:437px;width:90px;height:13px;background:#BFFFFF;"></div>
<div style="left:1181px;top:437px;width:29px;height:13px;background:#BFFFFF;"></div>
<div style="left:1091px;top:455px;width:55px;height:13px;background:#FFFFFF;"></div>
<div class="t" style="left:818.8px;width:600px;text-align:center;top:456.00px;font-size:9.5px;line-height:11px;font-weight:bold;color:#0000FF;">Edit</div>
<div style="left:222px;top:475px;width:25px;height:13px;background:#B4B4B4;"></div>
<div class="t" style="left:-353.8px;width:600px;text-align:right;top:476.00px;font-size:9.5px;line-height:11px;font-weight:bold;color:#000;">4.5</div>
<div style="left:249px;top:475px;width:285px;height:32px;background:#B4D0F0;"></div>
<div class="t" style="left:249.0px;top:476.00px;font-size:12px;line-height:14px;font-weight:normal;color:#0000FF;transform:scaleX(1.0121);transform-origin:0 0;">ETEST</div>
<div style="left:537px;top:475px;width:62px;height:16px;background:#BFFFFF;"></div>
<div style="left:537px;top:492px;width:62px;height:16px;background:#FFFF9F;"></div>
<div style="left:600px;top:475px;width:76px;height:16px;background:#BFFFFF;"></div>
<div style="left:600px;top:492px;width:76px;height:16px;background:#FFFF9F;"></div>
<div style="left:677px;top:475px;width:47px;height:16px;background:#BFFFFF;"></div>
<div style="left:677px;top:492px;width:47px;height:16px;background:#FFFF9F;"></div>
<div class="t" style="left:267.5px;width:600px;text-align:center;top:476.00px;font-size:12px;line-height:14px;font-weight:normal;color:#000;">110</div>
<div class="t" style="left:267.5px;width:600px;text-align:center;top:493.00px;font-size:12px;line-height:14px;font-weight:normal;color:#000;">100</div>
<div class="t" style="left:337px;width:600px;text-align:center;top:476.00px;font-size:12px;line-height:14px;font-weight:normal;color:#000;">6/22/2017</div>
<div class="t" style="left:337px;width:600px;text-align:center;top:493.00px;font-size:12px;line-height:14px;font-weight:normal;color:#000;">6/24/2017</div>
<div class="t" style="left:400.5px;width:600px;text-align:center;top:476.00px;font-size:12px;line-height:14px;font-weight:normal;color:#000;">16:32</div>
<div class="t" style="left:400.5px;width:600px;text-align:center;top:493.00px;font-size:12px;line-height:14px;font-weight:normal;color:#000;">10:47</div>
<div style="left:726px;top:475px;width:35px;height:13px;background:#FFFFC8;"></div>
<div style="left:764px;top:474px;width:35px;height:13px;background:#FFFFFF;"></div>
<div class="t" style="left:775.03px;top:475.00px;font-size:10px;line-height:11px;font-weight:bold;color:#000;transform:scaleX(1.0600);transform-origin:19.47px 0;">90.9</div>
<div style="left:732px;top:492px;width:69px;height:13px;background:#FFFF9F;"></div>
<div style="left:732px;top:492px;width:13px;height:13px;box-sizing:border-box;border:1px solid #ADADAD;background:#FDFDFD;border-radius:2px;"></div>
<div class="t" style="left:747.0px;top:494.00px;font-size:9.5px;line-height:11px;font-weight:bold;color:#76767A;transform:scaleX(1.0575);transform-origin:0 0;">Transform</div>
<div style="left:806px;top:475px;width:40px;height:13px;background:#BFFFFF;"></div>
<div style="left:806px;top:492px;width:40px;height:13px;background:#FFFF9F;"></div>
<div class="t" style="left:816.33px;top:476.00px;font-size:10px;line-height:11px;font-weight:bold;color:#000;transform:scaleX(1.0600);transform-origin:29.47px 0;">.81hrs</div>
<div class="t" style="left:810.77px;top:493.00px;font-size:10px;line-height:11px;font-weight:bold;color:#000;transform:scaleX(1.0600);transform-origin:35.03px 0;">42.2hrs</div>
<div style="left:851px;top:475px;width:40px;height:13px;background:#BFFFFF;"></div>
<div class="t" style="left:884.94px;top:476.00px;font-size:10px;line-height:11px;font-weight:bold;color:#000;transform:scaleX(1.0600);transform-origin:5.56px 0;">1</div>
<div style="left:895px;top:475px;width:48px;height:13px;background:#BFFFFF;"></div>
<div style="left:895px;top:492px;width:48px;height:13px;background:#FFFF9F;"></div>
<div class="t" style="left:894.5px;top:476.00px;font-size:10px;line-height:11px;font-weight:bold;color:#000;transform:scaleX(1.0607);transform-origin:0 0;">000001</div>
<div class="t" style="left:894.5px;top:493.00px;font-size:10px;line-height:11px;font-weight:bold;color:#000;transform:scaleX(1.0607);transform-origin:0 0;">000001</div>
<div style="left:945px;top:475px;width:141px;height:13px;background:#BFFFFF;"></div>
<div style="left:945px;top:492px;width:69px;height:13px;background:#FFFF9F;"></div>
<div style="left:1015px;top:492px;width:71px;height:13px;background:#FFFF9F;"></div>
<div class="t" style="left:944.5px;top:476.00px;font-size:10px;line-height:11px;font-weight:bold;color:#000;transform:scaleX(0.9500);transform-origin:0 0;">TE</div>
<div class="t" style="left:958.0px;top:476.00px;font-size:10px;line-height:11px;font-weight:bold;color:#000;transform:scaleX(0.9500);transform-origin:0 0;">ST</div>
<div class="t" style="left:945.0px;top:493.00px;font-size:10px;line-height:11px;font-weight:bold;color:#000;transform:scaleX(0.9500);transform-origin:0 0;">ITE</div>
<div class="t" style="left:961.5px;top:493.00px;font-size:10px;line-height:11px;font-weight:bold;color:#000;transform:scaleX(0.9500);transform-origin:0 0;">ST</div>
<div class="t" style="left:1029.98px;top:493.00px;font-size:10px;line-height:11px;font-weight:bold;color:#000;transform:scaleX(1.0822);transform-origin:55.62px 0;">0x00010000</div>
<div style="left:1089px;top:475px;width:90px;height:13px;background:#BFFFFF;"></div>
<div style="left:1181px;top:475px;width:29px;height:13px;background:#BFFFFF;"></div>
<div style="left:1091px;top:493px;width:55px;height:13px;background:#FF0000;"></div>
<div class="t" style="left:818.8px;width:600px;text-align:center;top:494.00px;font-size:9.5px;line-height:11px;font-weight:bold;color:#0000FF;">Edit</div>
<div style="left:222px;top:513px;width:25px;height:13px;background:#808080;"></div>
<div class="t" style="left:-353.8px;width:600px;text-align:right;top:514.00px;font-size:9.5px;line-height:11px;font-weight:bold;color:#000;">5</div>
<div style="left:249px;top:513px;width:285px;height:32px;background:#B4D0F0;"></div>
<div class="t" style="left:249.0px;top:514.00px;font-size:12px;line-height:14px;font-weight:normal;color:#0000FF;transform:scaleX(1.0182);transform-origin:0 0;">Electrical Test at 125C.</div>
<div class="t" style="left:249.0px;top:529.00px;font-size:12px;line-height:14px;font-weight:normal;color:#0000FF;transform:scaleX(1.0364);transform-origin:0 0;">Soak time 180 seconds.</div>
<div style="left:537px;top:513px;width:62px;height:16px;background:#BFFFFF;"></div>
<div style="left:537px;top:530px;width:62px;height:16px;background:#FFFF9F;"></div>
<div style="left:600px;top:513px;width:76px;height:16px;background:#BFFFFF;"></div>
<div style="left:600px;top:530px;width:76px;height:16px;background:#FFFF9F;"></div>
<div style="left:677px;top:513px;width:47px;height:16px;background:#BFFFFF;"></div>
<div style="left:677px;top:530px;width:47px;height:16px;background:#FFFF9F;"></div>
<div class="t" style="left:267.5px;width:600px;text-align:center;top:514.00px;font-size:12px;line-height:14px;font-weight:normal;color:#000;">120</div>
<div class="t" style="left:267.5px;width:600px;text-align:center;top:531.00px;font-size:12px;line-height:14px;font-weight:normal;color:#000;">110</div>
<div class="t" style="left:337px;width:600px;text-align:center;top:514.00px;font-size:12px;line-height:14px;font-weight:normal;color:#000;">4/18/2017</div>
<div class="t" style="left:337px;width:600px;text-align:center;top:531.00px;font-size:12px;line-height:14px;font-weight:normal;color:#000;">5/10/2017</div>
<div class="t" style="left:400.5px;width:600px;text-align:center;top:514.00px;font-size:12px;line-height:14px;font-weight:normal;color:#000;">08:30</div>
<div class="t" style="left:400.5px;width:600px;text-align:center;top:531.00px;font-size:12px;line-height:14px;font-weight:normal;color:#000;">17:14</div>
<div style="left:726px;top:513px;width:35px;height:13px;background:#FFFFC8;"></div>
<div style="left:764px;top:512px;width:35px;height:13px;background:#FFFFFF;"></div>
<div class="t" style="left:775.03px;top:513.00px;font-size:10px;line-height:11px;font-weight:bold;color:#000;transform:scaleX(1.0600);transform-origin:19.47px 0;">91.6</div>
<div style="left:732px;top:530px;width:69px;height:13px;background:#FFFF9F;"></div>
<div style="left:732px;top:530px;width:13px;height:13px;box-sizing:border-box;border:1px solid #ADADAD;background:#FDFDFD;border-radius:2px;"></div>
<div class="t" style="left:747.0px;top:532.00px;font-size:9.5px;line-height:11px;font-weight:bold;color:#76767A;transform:scaleX(1.0575);transform-origin:0 0;">Transform</div>
<div style="left:806px;top:513px;width:40px;height:13px;background:#BFFFFF;"></div>
<div style="left:806px;top:530px;width:40px;height:13px;background:#FFFF9F;"></div>
<div class="t" style="left:810.77px;top:514.00px;font-size:10px;line-height:11px;font-weight:bold;color:#000;transform:scaleX(1.0600);transform-origin:35.03px 0;">1.33hrs</div>
<div class="t" style="left:805.21px;top:531.00px;font-size:10px;line-height:11px;font-weight:bold;color:#000;transform:scaleX(1.0600);transform-origin:40.59px 0;">536.7hrs</div>
<div style="left:851px;top:513px;width:40px;height:13px;background:#BFFFFF;"></div>
<div class="t" style="left:884.94px;top:514.00px;font-size:10px;line-height:11px;font-weight:bold;color:#000;transform:scaleX(1.0600);transform-origin:5.56px 0;">1</div>
<div style="left:895px;top:513px;width:48px;height:13px;background:#BFFFFF;"></div>
<div style="left:895px;top:530px;width:48px;height:13px;background:#FFFF9F;"></div>
<div class="t" style="left:894.5px;top:514.00px;font-size:10px;line-height:11px;font-weight:bold;color:#000;transform:scaleX(1.0607);transform-origin:0 0;">000001</div>
<div class="t" style="left:894.5px;top:531.00px;font-size:10px;line-height:11px;font-weight:bold;color:#000;transform:scaleX(1.0607);transform-origin:0 0;">000001</div>
<div style="left:945px;top:513px;width:141px;height:13px;background:#BFFFFF;"></div>
<div style="left:945px;top:530px;width:69px;height:13px;background:#FFFF9F;"></div>
<div style="left:1015px;top:530px;width:71px;height:13px;background:#FFFF9F;"></div>
<div class="t" style="left:944.5px;top:514.00px;font-size:10px;line-height:11px;font-weight:bold;color:#000;transform:scaleX(0.9500);transform-origin:0 0;">TE</div>
<div class="t" style="left:958.0px;top:514.00px;font-size:10px;line-height:11px;font-weight:bold;color:#000;transform:scaleX(0.9500);transform-origin:0 0;">ST</div>
<div class="t" style="left:945.0px;top:531.00px;font-size:10px;line-height:11px;font-weight:bold;color:#000;transform:scaleX(0.9500);transform-origin:0 0;">ITE</div>
<div class="t" style="left:961.5px;top:531.00px;font-size:10px;line-height:11px;font-weight:bold;color:#000;transform:scaleX(0.9500);transform-origin:0 0;">ST</div>
<div style="left:1089px;top:513px;width:90px;height:13px;background:#BFFFFF;"></div>
<div style="left:1181px;top:513px;width:29px;height:13px;background:#BFFFFF;"></div>
<div style="left:1091px;top:531px;width:55px;height:13px;background:#FFFFFF;"></div>
<div class="t" style="left:818.8px;width:600px;text-align:center;top:532.00px;font-size:9.5px;line-height:11px;font-weight:bold;color:#0000FF;">Edit</div>
<div style="left:801px;top:512px;width:5px;height:34px;background:#F0F0F0;"></div>
<div style="left:803px;top:511px;width:1px;height:36px;background:#666666;"></div>
<div style="left:226px;top:596px;width:45px;height:42px;background:#FFFFFF;"></div>
<svg style="position:absolute;left:230px;top:600px;" width="36" height="33" viewBox="0 0 36 33"><defs><radialGradient id="fg" cx="45%" cy="40%" r="70%"><stop offset="0" stop-color="#D6D6D6"/><stop offset="0.6" stop-color="#BDBDBD"/><stop offset="1" stop-color="#8A8A8A"/></radialGradient></defs>
<rect x="1" y="1" width="34" height="31" rx="2" fill="url(#fg)"/>
<path d="M1.5 5 L1.5 1.5 L5 1.5 M31 1.5 L34.5 1.5 L34.5 5 M1.5 28 L1.5 31.5 L5 31.5 M31 31.5 L34.5 31.5 L34.5 28" fill="none" stroke="#8C8C8C" stroke-width="1"/>
<path d="M3 3 L33 3 L33 30 L3 30 Z" fill="none" stroke="#FFFFFF" stroke-opacity="0.35" stroke-width="1"/>
<path d="M8.5 23 L8.5 13.5 L10.5 11.5 L15 11.5 L16.5 13 L24 13 L24 15.5" fill="none" stroke="#FFFFFF" stroke-width="1.2"/>
<path d="M8.5 23 L12 15.5 L28 15.5 L24.5 23 Z" fill="#B4B4B4" stroke="#FFFFFF" stroke-width="1.2"/></svg>
<svg style="position:absolute;left:276px;top:602px;" width="28" height="34" viewBox="0 0 28 34"><defs><linearGradient id="pg" x1="0" y1="0" x2="0" y2="1"><stop offset="0" stop-color="#EAF4FF"/><stop offset="0.55" stop-color="#C8E0FA"/><stop offset="1" stop-color="#8DB6EE"/></linearGradient></defs>
<rect x="0.5" y="0.5" width="26" height="26" fill="url(#pg)" stroke="#8A8A8A" stroke-width="1"/>
<rect x="1" y="1" width="25" height="1" fill="#6E6E6E"/>
<rect x="1" y="1" width="1" height="25" fill="#6E6E6E"/>
<rect x="2" y="24.5" width="24" height="1.5" fill="#3D74C8"/>
<path d="M13.5 11.5 L13.5 18.5 A1 1 0 0 0 15.5 18.5 L15.5 9.5 A2 2 0 0 0 11.5 9.5 L11.5 18.5 A3 3 0 0 0 17.5 18.5 L17.5 10.5" fill="none" stroke="#44628F" stroke-width="0.85"/></svg>
<div class="t" style="left:-11px;width:600px;text-align:center;top:625.00px;font-size:10px;line-height:11px;font-weight:bold;color:#1A1A40;">0</div>
<svg style="position:absolute;left:338px;top:600px;" width="34" height="34" viewBox="0 0 34 34"><g fill="#EE0000">
<polygon points="2.2,12.8 8,8 8,11 12.5,11 12.5,14.5 8,14.5 8,16.8"/>
<polygon points="29.8,12.8 24,8 24,11 18.5,11 18.5,14.5 24,14.5 24,16.8"/>
</g>
<path d="M21.6 3.2 L9.4 21.4" stroke="#A01414" stroke-width="1"/><path d="M24.8 3.2 L12.6 21.4" stroke="#A01414" stroke-width="1"/>
<g fill="none" stroke="#2A2A2A" stroke-width="0.95">
<path d="M7.9 22.8 L3.8 22.8 L3.8 26.8 L7.4 26.8 L7.4 30.9 L3.2 30.9"/>
<path d="M10.1 31.5 L10.1 22.8 L14.2 22.8 L14.2 27 L10.1 27"/>
<path d="M16.8 22.2 L16.8 30.9 L19.8 30.9"/>
<path d="M21.6 23.5 L21.6 31.5"/>
<path d="M22.8 22.8 L29.8 22.8 M26.2 22.8 L26.2 31.5"/>
</g><rect x="21" y="20" width="1.2" height="1.2" fill="#2A2A2A"/></svg>
<svg style="position:absolute;left:386px;top:600px;" width="38" height="28" viewBox="0 0 38 28"><polygon points="3.9,7.90 11.4,7.90 11.4,4.90 16,9.90 11.4,14.40 11.4,12.00 3.9,12.00" fill="#000090"/>
<polygon points="34.1,7.90 26.6,7.90 26.6,4.90 21.9,9.90 26.6,14.40 26.6,12.00 34.1,12.00" fill="#000090"/><path transform="translate(6.00,17) scale(1.0,1.0)" d="M0.6 7 L0.6 0.6 L2.5 3.2 L4.4 0.6 L4.4 7" fill="none" stroke="#1E1E1E" stroke-width="1.00" stroke-linejoin="miter"/><path transform="translate(11.20,17) scale(1.0,1.0)" d="M4.4 0.6 L0.6 0.6 L0.6 6.4 L4.4 6.4 M0.6 3.5 L3.8 3.5" fill="none" stroke="#1E1E1E" stroke-width="1.00" stroke-linejoin="miter"/><path transform="translate(16.40,17) scale(1.0,1.0)" d="M0.6 7 L0.6 0.6 L3.6 0.6 L4.4 1.4 L4.4 2.8 L3.6 3.5 L0.6 3.5 M2.4 3.8 L4.4 7" fill="none" stroke="#1E1E1E" stroke-width="1.00" stroke-linejoin="miter"/><path transform="translate(21.60,17) scale(1.0,1.0)" d="M4.4 1.2 L4.4 0.6 L0.6 0.6 L0.6 6.4 L4.4 6.4 L4.4 3.6 L2.6 3.6" fill="none" stroke="#1E1E1E" stroke-width="1.00" stroke-linejoin="miter"/><path transform="translate(26.80,17) scale(1.0,1.0)" d="M4.4 0.6 L0.6 0.6 L0.6 6.4 L4.4 6.4 M0.6 3.5 L3.8 3.5" fill="none" stroke="#1E1E1E" stroke-width="1.00" stroke-linejoin="miter"/></svg>
<svg style="position:absolute;left:439px;top:599px;" width="38" height="28" viewBox="0 0 38 28"><polygon points="3.9,7.90 11.4,7.90 11.4,4.90 16,9.90 11.4,14.40 11.4,12.00 3.9,12.00" fill="#000090"/>
<polygon points="34.1,7.90 26.6,7.90 26.6,4.90 21.9,9.90 26.6,14.40 26.6,12.00 34.1,12.00" fill="#000090"/><path transform="translate(6.00,17) scale(1.0,1.0)" d="M0.6 7 L0.6 0.6 L2.5 3.2 L4.4 0.6 L4.4 7" fill="none" stroke="#1E1E1E" stroke-width="1.00" stroke-linejoin="miter"/><path transform="translate(11.20,17) scale(1.0,1.0)" d="M4.4 0.6 L0.6 0.6 L0.6 6.4 L4.4 6.4 M0.6 3.5 L3.8 3.5" fill="none" stroke="#1E1E1E" stroke-width="1.00" stroke-linejoin="miter"/><path transform="translate(16.40,17) scale(1.0,1.0)" d="M0.6 7 L0.6 0.6 L3.6 0.6 L4.4 1.4 L4.4 2.8 L3.6 3.5 L0.6 3.5 M2.4 3.8 L4.4 7" fill="none" stroke="#1E1E1E" stroke-width="1.00" stroke-linejoin="miter"/><path transform="translate(21.60,17) scale(1.0,1.0)" d="M4.4 1.2 L4.4 0.6 L0.6 0.6 L0.6 6.4 L4.4 6.4 L4.4 3.6 L2.6 3.6" fill="none" stroke="#1E1E1E" stroke-width="1.00" stroke-linejoin="miter"/><path transform="translate(26.80,17) scale(1.0,1.0)" d="M4.4 0.6 L0.6 0.6 L0.6 6.4 L4.4 6.4 M0.6 3.5 L3.8 3.5" fill="none" stroke="#1E1E1E" stroke-width="1.00" stroke-linejoin="miter"/></svg>
<div class="t" style="left:436.33px;top:623.00px;font-size:12px;line-height:14px;font-weight:bold;color:#000;transform:scaleX(1.0714);transform-origin:21.67px 0;">Ext Job</div>
<svg style="position:absolute;left:495px;top:601px;" width="38" height="34" viewBox="0 0 38 34"><polygon points="3.9,7.6 11,7.6 11,5.3 15.2,9.3 11,13.2 11,11 3.9,11" fill="#000090"/>
<polygon points="33.4,7.6 26.5,7.6 26.5,5.3 22.3,9.3 26.5,13.2 26.5,11 33.4,11" fill="#E0105A"/>
<path d="M4.2 25 L8.6 30.4 M8.6 25 L4.2 30.4" stroke="#D0106A" stroke-width="1.8"/><path transform="translate(9.60,24) scale(0.95,1.0)" d="M0.6 7 L0.6 0.6 L2.5 3.2 L4.4 0.6 L4.4 7" fill="none" stroke="#1E1E1E" stroke-width="1.05" stroke-linejoin="miter"/><path transform="translate(14.54,24) scale(0.95,1.0)" d="M4.4 0.6 L0.6 0.6 L0.6 6.4 L4.4 6.4 M0.6 3.5 L3.8 3.5" fill="none" stroke="#1E1E1E" stroke-width="1.05" stroke-linejoin="miter"/><path transform="translate(19.48,24) scale(0.95,1.0)" d="M0.6 7 L0.6 0.6 L3.6 0.6 L4.4 1.4 L4.4 2.8 L3.6 3.5 L0.6 3.5 M2.4 3.8 L4.4 7" fill="none" stroke="#1E1E1E" stroke-width="1.05" stroke-linejoin="miter"/><path transform="translate(24.42,24) scale(0.95,1.0)" d="M4.4 1.2 L4.4 0.6 L0.6 0.6 L0.6 6.4 L4.4 6.4 L4.4 3.6 L2.6 3.6" fill="none" stroke="#1E1E1E" stroke-width="1.05" stroke-linejoin="miter"/><path transform="translate(29.36,24) scale(0.95,1.0)" d="M4.4 0.6 L0.6 0.6 L0.6 6.4 L4.4 6.4 M0.6 3.5 L3.8 3.5" fill="none" stroke="#1E1E1E" stroke-width="1.05" stroke-linejoin="miter"/></svg>
<div class="t" style="left:555.16px;top:604.00px;font-size:12px;line-height:14px;font-weight:bold;color:#FF0000;transform:scaleX(1.1968);transform-origin:10.34px 0;">Out</div>
<div class="t" style="left:544.66px;top:618.00px;font-size:12px;line-height:14px;font-weight:bold;color:#FF0000;transform:scaleX(1.0676);transform-origin:20.34px 0;">Source</div>
<div style="left:595px;top:610px;width:51px;height:21px;box-sizing:border-box;border:1px solid #000;background:#F0F0F0;box-shadow:inset 0 0 0 1px #FFFFFF;"></div>
<div class="t" style="left:599.0px;top:614.00px;font-size:9.5px;line-height:11px;font-weight:bold;color:#000;transform:scaleX(1.0920);transform-origin:0 0;">Check</div>
<svg style="position:absolute;left:634px;top:617px;" width="10" height="6" viewBox="0 0 10 6"><polygon points="1.5,1 8.5,1 5,5" fill="#000"/></svg>
<div style="left:650px;top:610px;width:66px;height:19px;box-sizing:border-box;border:1px solid #C8C8C8;background:#FFFFFF;border-radius:3px;"></div>
<div class="t" style="left:657.0px;top:612.00px;font-size:12px;line-height:14px;font-weight:normal;color:#000;">Add Step</div>
<div style="left:720px;top:610px;width:68px;height:19px;box-sizing:border-box;border:1px solid #C8C8C8;background:#FFFFFF;border-radius:3px;"></div>
<div class="t" style="left:723.3px;top:612.00px;font-size:12px;line-height:14px;font-weight:normal;color:#000;transform:scaleX(1.0499);transform-origin:0 0;">Step sheet</div>
<div style="left:826px;top:605px;width:72px;height:29px;box-sizing:border-box;border:1px solid;background:transparent;border-color:#FFFFFF #8C8C8C #8C8C8C #FFFFFF;"></div>
<div style="left:829px;top:608px;width:66px;height:23px;box-sizing:border-box;border:1px solid;background:transparent;border-color:#8C8C8C #FFFFFF #FFFFFF #8C8C8C;"></div>
<div style="left:831px;top:610px;width:62px;height:19px;box-sizing:border-box;border:none;background:#F7F7F7;border-radius:3px;"></div>
<div class="t" style="left:837.4px;top:611.00px;font-size:13px;line-height:15px;font-weight:bold;color:#7E7E7E;transform:scaleX(1.0393);transform-origin:0 0;">Prev lot</div>
<div style="left:904px;top:605px;width:72px;height:29px;box-sizing:border-box;border:1px solid;background:transparent;border-color:#FFFFFF #8C8C8C #8C8C8C #FFFFFF;"></div>
<div style="left:907px;top:608px;width:66px;height:23px;box-sizing:border-box;border:1px solid;background:transparent;border-color:#8C8C8C #FFFFFF #FFFFFF #8C8C8C;"></div>
<div style="left:909px;top:610px;width:62px;height:19px;box-sizing:border-box;border:none;background:#F7F7F7;border-radius:3px;"></div>
<div class="t" style="left:914.2px;top:611.00px;font-size:13px;line-height:15px;font-weight:bold;color:#7E7E7E;transform:scaleX(1.0606);transform-origin:0 0;">Next lot</div>
<svg style="position:absolute;left:1028px;top:601px;" width="42" height="42" viewBox="0 0 42 42"><defs><linearGradient id="xg" x1="0" y1="0" x2="1" y2="1"><stop offset="0" stop-color="#FFFFFF"/><stop offset="1" stop-color="#BFD8F4"/></linearGradient>
<radialGradient id="gl" cx="40%" cy="35%" r="60%"><stop offset="0" stop-color="#CDE6D8"/><stop offset="1" stop-color="#7FA8B8"/></radialGradient></defs>
<rect x="1" y="1" width="40" height="40" fill="#F4FAFF"/>
<path d="M7.5 1.5 L30 1.5 L38.5 10 L38.5 40.5 L7.5 40.5 Z" fill="url(#xg)" stroke="#6F86A8" stroke-width="1.2"/>
<path d="M30 1.5 L30 10 L38.5 10" fill="#DDEBFA" stroke="#6F86A8" stroke-width="1"/>
<rect x="1" y="6" width="24.5" height="10" fill="#F0A040"/>
<text x="13" y="14.5" font-family="Liberation Sans" font-size="9" font-weight="bold" fill="#FFFFFF" text-anchor="middle">XML</text>
<path d="M11 22 L33 22 M11 27 L22 27 M11 31.5 L22 31.5" stroke="#B8CCE4" stroke-width="1"/>
<circle cx="29" cy="30" r="5.5" fill="url(#gl)"/></svg>
<svg style="position:absolute;left:1100px;top:610px;" width="24" height="22" viewBox="0 0 24 22"><polygon points="3.5,4 6.8,1.8 13,9.5 19.5,17 17,19.8 10.5,12.5" fill="#000066"/>
<polygon points="20.5,4.2 21.6,6.4 12.5,12 4.2,16.8 2.2,14.6 10.2,9.2" fill="#000066"/>
<polygon points="17,19.8 19.5,17 19.8,18.4 17.6,20.6" fill="#333388"/></svg>
<svg style="position:absolute;left:1160px;top:604px;" width="30" height="31" viewBox="0 0 30 31"><polygon points="1.5,14.5 6.5,10.5 11.5,20 27.5,2 29,4.5 12,28.5" fill="#008800"/></svg>
<svg style="position:absolute;left:986px;top:27px;" width="22" height="20" viewBox="0 0 22 20"><rect x="0.6" y="1.8" width="21.4" height="17.2" fill="#DCDCDC"/>
<path d="M5 19 L5 14 L9 13 L13 15 L17 12 L22 12.5 L22 19 Z" fill="#48B840"/>
<path d="M5 19 L5 15 L8 14 L11 19 Z" fill="#1F4FB0"/>
<path d="M14 19 L16 14.5 L22 13.5 L22 19 Z" fill="#3A8FE0"/>
<path d="M19 3 L21 5 L21 11 L19 12 Z" fill="#555"/>
<ellipse cx="16" cy="7.3" rx="3.2" ry="4.3" fill="#FFFFFF" stroke="#111" stroke-width="0.9"/>
<path d="M15.5 4.2 L15.5 8 L17.3 10.3" fill="none" stroke="#111" stroke-width="1.1"/>
<rect x="1.6" y="5.6" width="11" height="8.6" fill="#F2EED4" stroke="#000" stroke-width="1.2"/>
<path d="M3.6 4.6 L3.6 7.6 M6.6 4.6 L6.6 7.6 M9.6 4.6 L9.6 7.6" stroke="#000" stroke-width="1.3"/>
<text x="7.2" y="13" font-family="Liberation Sans" font-size="6" font-weight="bold" fill="#000" text-anchor="middle">25</text></svg>
<svg style="position:absolute;left:980px;top:232px;" width="22" height="20" viewBox="0 0 22 20"><rect x="0.6" y="1.8" width="21.4" height="17.2" fill="#DCDCDC"/>
<path d="M5 19 L5 14 L9 13 L13 15 L17 12 L22 12.5 L22 19 Z" fill="#48B840"/>
<path d="M5 19 L5 15 L8 14 L11 19 Z" fill="#1F4FB0"/>
<path d="M14 19 L16 14.5 L22 13.5 L22 19 Z" fill="#3A8FE0"/>
<path d="M19 3 L21 5 L21 11 L19 12 Z" fill="#555"/>
<ellipse cx="16" cy="7.3" rx="3.2" ry="4.3" fill="#FFFFFF" stroke="#111" stroke-width="0.9"/>
<path d="M15.5 4.2 L15.5 8 L17.3 10.3" fill="none" stroke="#111" stroke-width="1.1"/>
<rect x="1.6" y="5.6" width="11" height="8.6" fill="#F2EED4" stroke="#000" stroke-width="1.2"/>
<path d="M3.6 4.6 L3.6 7.6 M6.6 4.6 L6.6 7.6 M9.6 4.6 L9.6 7.6" stroke="#000" stroke-width="1.3"/>
<text x="7.2" y="13" font-family="Liberation Sans" font-size="6" font-weight="bold" fill="#000" text-anchor="middle">25</text></svg>
<div style="left:221px;top:232px;width:20px;height:20px;background:#C8C8C8;"></div>
<svg style="position:absolute;left:221px;top:232px;" width="20" height="20" viewBox="0 0 20 20"><path d="M15.5 4.8 A6.6 6.6 0 1 0 10.2 15.6" fill="none" stroke="#2A1A5E" stroke-width="3.2"/>
<path d="M15.5 4.8 A6.6 6.6 0 1 0 10.2 15.6" fill="none" stroke="#E2D4F8" stroke-width="1.3"/>
<path d="M11.2 7.2 L14.6 10.6 L18.6 6.6" fill="none" stroke="#2A1A5E" stroke-width="1.4"/>
<circle cx="14.6" cy="14.6" r="2.3" fill="#F2E6FA" stroke="#2A1A5E" stroke-width="1.3"/></svg>
<div style="left:564px;top:122px;width:27px;height:22px;box-sizing:border-box;border:2px solid #1A1A1A;background:#F2F2F2;"></div>
<svg style="position:absolute;left:566px;top:124px;" width="24" height="20" viewBox="0 0 24 20"><defs><linearGradient id="cg" x1="0" y1="0" x2="1" y2="0"><stop offset="0" stop-color="#9FA8B8"/><stop offset="0.5" stop-color="#E8EEF8"/><stop offset="1" stop-color="#8090A8"/></linearGradient></defs>
<path d="M8 1.5 L16 1.5 L17.5 3 L17.5 16 L15 18 L10 18 L8 16 Z" fill="url(#cg)" stroke="#111" stroke-width="1.1"/>
<path d="M11 5 L11 16 M14 3.5 L14 16" stroke="#222" stroke-width="1"/>
<rect x="9" y="2.5" width="7.5" height="2.5" fill="#C8CCD4"/></svg>
<svg style="position:absolute;left:571px;top:147px;" width="17" height="15" viewBox="0 0 17 15"><path d="M8.5 7.5 L8.50 0.70 A7.5 6.8 0 0 1 13.80 2.69 Z" fill="#F0C040"/><path d="M8.5 7.5 L13.80 2.69 A7.5 6.8 0 0 1 16.00 7.50 Z" fill="#F08A40"/><path d="M8.5 7.5 L16.00 7.50 A7.5 6.8 0 0 1 13.80 12.31 Z" fill="#E050A0"/><path d="M8.5 7.5 L13.80 12.31 A7.5 6.8 0 0 1 8.50 14.30 Z" fill="#B060E0"/><path d="M8.5 7.5 L8.50 14.30 A7.5 6.8 0 0 1 3.20 12.31 Z" fill="#60B0E0"/><path d="M8.5 7.5 L3.20 12.31 A7.5 6.8 0 0 1 1.00 7.50 Z" fill="#50D0B0"/><path d="M8.5 7.5 L1.00 7.50 A7.5 6.8 0 0 1 3.20 2.69 Z" fill="#70D060"/><path d="M8.5 7.5 L3.20 2.69 A7.5 6.8 0 0 1 8.50 0.70 Z" fill="#C0E050"/>
<ellipse cx="8.5" cy="7.5" rx="4.8" ry="4.3" fill="#FFFFFF" fill-opacity="0.35"/>
<path d="M1.8 7.6 Q8.5 1.8 15.2 7.6 Q8.5 12.6 1.8 7.6 Z" fill="#FFFFFF" stroke="#000" stroke-width="1.3"/>
<circle cx="8.5" cy="7.2" r="2.5" fill="#0A3040"/></svg>
</body></html>
